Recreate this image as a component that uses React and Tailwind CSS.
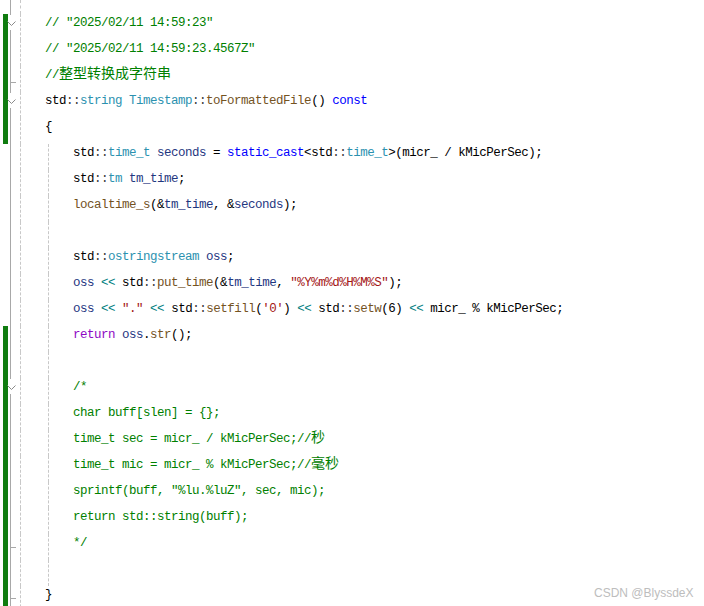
const tone = {
  k: 'text-[#000000]',
  p: 'text-[#3c3c3c]',
  t: 'text-[#2b91af]',
  f: 'text-[#74531f]',
  b: 'text-[#0000ff]',
  v: 'text-[#1f377f]',
  s: 'text-[#a31515]',
  r: 'text-[#8f08c4]',
  o: 'text-[#008080]',
  c: 'text-[#008000]',
}

const std = [['k', 'std'], ['p', '::']]

// green = changed line marker, fold = outline mark, guide = indent guide
const lines = [
  { green: true, fold: 'open', tokens: [['c', '// "2025/02/11 14:59:23"']] },
  { green: true, tokens: [['c', '// "2025/02/11 14:59:23.4567Z"']] },
  { green: true, tick: 'top-[16px]', tokens: [['c', '//'], ['c', '整型转换成字符串', true]] },
  {
    green: true,
    fold: 'open',
    tokens: [...std, ['t', 'string'], ['k', ' '], ['t', 'Timestamp'], ['p', '::'], ['f', 'toFormattedFile'], ['k', '() '], ['b', 'const']],
  },
  { green: true, tokens: [['k', '{']] },
  {
    guide: true,
    tokens: [
      ...std, ['t', 'time_t'], ['k', ' '], ['v', 'seconds'], ['k', ' = '], ['b', 'static_cast'], ['k', '<'],
      ...std, ['t', 'time_t'], ['k', '>(micr_ / kMicPerSec);'],
    ],
  },
  { guide: true, tokens: [...std, ['t', 'tm'], ['k', ' '], ['v', 'tm_time'], ['k', ';']] },
  { guide: true, tokens: [['f', 'localtime_s'], ['k', '(&'], ['v', 'tm_time'], ['k', ', &'], ['v', 'seconds'], ['k', ');']] },
  { guide: true, tokens: [] },
  { guide: true, tokens: [...std, ['t', 'ostringstream'], ['k', ' '], ['v', 'oss'], ['k', ';']] },
  {
    guide: true,
    tokens: [
      ['v', 'oss'], ['k', ' '], ['o', '<<'], ['k', ' '], ...std, ['f', 'put_time'], ['k', '(&'], ['v', 'tm_time'], ['k', ', '],
      ['s', '"%Y%m%d%H%M%S"'], ['k', ');'],
    ],
  },
  {
    guide: true,
    tokens: [
      ['v', 'oss'], ['k', ' '], ['o', '<<'], ['k', ' '], ['s', '"."'], ['k', ' '], ['o', '<<'], ['k', ' '], ...std, ['f', 'setfill'],
      ['k', '('], ['s', "'0'"], ['k', ') '], ['o', '<<'], ['k', ' '], ...std, ['f', 'setw'], ['k', '(6) '], ['o', '<<'],
      ['k', ' micr_ % kMicPerSec;'],
    ],
  },
  { guide: true, green: true, tokens: [['r', 'return'], ['k', ' '], ['v', 'oss'], ['k', '.'], ['f', 'str'], ['k', '();']] },
  { guide: true, green: true, tokens: [] },
  { guide: true, green: true, fold: 'open', tokens: [['c', '/*']] },
  { guide: true, green: true, tokens: [['c', 'char buff[slen] = {};']] },
  { guide: true, green: true, tokens: [['c', 'time_t sec = micr_ / kMicPerSec;//'], ['c', '秒', true]] },
  { guide: true, green: true, tokens: [['c', 'time_t mic = micr_ % kMicPerSec;//'], ['c', '毫秒', true]] },
  { guide: true, green: true, tokens: [['c', 'sprintf(buff, "%lu.%luZ", sec, mic);']] },
  { guide: true, green: true, tokens: [['c', 'return std::string(buff);']] },
  { guide: true, green: true, tick: 'top-[13px]', tokens: [['c', '*/']] },
  { guide: true, green: true, tokens: [] },
  { green: true, tick: 'top-[12px]', tokens: [['k', '}']] },
]

function Gutter({ green, fold, tick }) {
  return (
    <div className="flex h-full shrink-0">
      <div className="w-[3px]" />
      <div className={green ? 'w-[5px] bg-[#107c10]' : 'w-[5px]'} />
      <div className="relative w-[12px]">
        {fold === 'open' ? (
          <div className="ml-[2px] flex h-full w-px flex-col">
            <div className="h-[1px] bg-[#a8a8a8]" />
            <div className="h-[15px]" />
            <div className="flex-1 bg-[#a8a8a8]" />
          </div>
        ) : (
          <div className="ml-[2px] h-full w-px bg-[#a8a8a8]" />
        )}
        {fold === 'open' && (
          <svg className="absolute left-[-1px] top-[7px]" width="9" height="5" viewBox="0 0 9 5">
            <path d="M0.5 0.5 L4.5 4.5 L8.5 0.5" stroke="#8a8a8a" strokeWidth="1" fill="none" />
          </svg>
        )}
        {tick && <div className={`absolute left-[2px] h-px w-[6px] bg-[#a8a8a8] ${tick}`} />}
      </div>
      <div className="h-full border-l border-dashed border-[#c8c8c8]" />
    </div>
  )
}

function Line({ line }) {
  return (
    <div className="flex h-[26px]">
      <Gutter green={line.green} fold={line.fold} tick={line.tick} />
      <div className="flex h-full flex-1">
        {line.guide && (
          <>
            <div className="w-[27px]" />
            <div className="h-full border-l border-dashed border-[#c8c8c8]" />
          </>
        )}
        <div className="whitespace-pre pl-[24px] text-[12.5px] leading-[18px] tracking-[-0.5px]">
          {line.tokens.map(([c, text, cjk], i) => (
            <span
              key={i}
              className={
                cjk
                  ? `${tone[c]} font-['Noto_Sans_CJK_SC',sans-serif] text-[14px] leading-[12px] tracking-normal`
                  : tone[c]
              }
            >
              {text}
            </span>
          ))}
        </div>
      </div>
    </div>
  )
}

export default function App() {
  return (
    <div className="relative h-[606px] w-full overflow-hidden bg-white font-['Liberation_Mono','Noto_Sans_CJK_SC',monospace]">
      <div className="flex h-[14px]">
        <Gutter />
      </div>
      {lines.map((line, i) => (
        <Line key={i} line={line} />
      ))}
      <div className="absolute left-[594px] top-[585px] font-['Liberation_Sans',sans-serif] text-[12px] leading-[16px] text-[#bdbdbd]">
        CSDN @BlyssdeX
      </div>
    </div>
  )
}
